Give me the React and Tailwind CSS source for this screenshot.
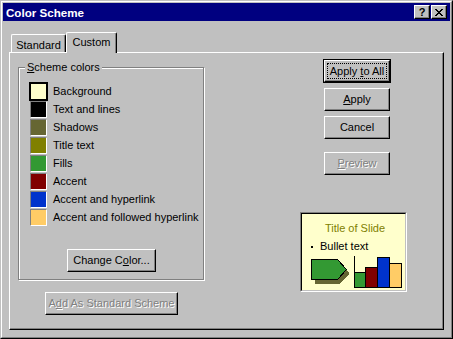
import React from "react";

const FONT = "font-['Liberation_Sans',Arial,sans-serif]";

function Bevel({ w, h, children, disabled, extra = "" }) {
  return (
    <div
      className={`${w} ${h} bg-[#c0c0c0] border border-t-white border-l-white border-r-black border-b-black shadow-[inset_-1px_-1px_0_#808080] flex items-center justify-center text-[11px] leading-[13px] ${
        disabled ? "text-[#808080] [text-shadow:1px_1px_0_#ffffff]" : "text-black"
      } ${extra}`}
    >
      {children}
    </div>
  );
}

function Swatch({ color, selected }) {
  return (
    <div
      className={`w-[17px] h-[17px] shrink-0 border ${
        selected
          ? "border-black shadow-[0_0_0_1px_#000]"
          : "border-t-[#808080] border-l-[#808080] border-r-white border-b-white"
      }`}
      style={{ backgroundColor: color }}
    />
  );
}

const rows = [
  ["Background", "#ffffcc", true],
  ["Text and lines", "#000000"],
  ["Shadows", "#666633"],
  ["Title text", "#808000"],
  ["Fills", "#339933"],
  ["Accent", "#800000"],
  ["Accent and hyperlink", "#0033cc"],
  ["Accent and followed hyperlink", "#ffcc66"],
];

function CloseGlyph() {
  const px = [
    [0, 0], [1, 0], [6, 0], [7, 0],
    [1, 1], [2, 1], [5, 1], [6, 1],
    [2, 2], [3, 2], [4, 2], [5, 2],
    [3, 3], [4, 3],
    [2, 4], [3, 4], [4, 4], [5, 4],
    [1, 5], [2, 5], [5, 5], [6, 5],
    [0, 6], [1, 6], [6, 6], [7, 6],
  ];
  return (
    <svg width="8" height="7" viewBox="0 0 8 7" shapeRendering="crispEdges">
      {px.map(([x, y], i) => (
        <rect key={i} x={x} y={y} width="1" height="1" fill="#000" />
      ))}
    </svg>
  );
}

function PreviewArt() {
  const pent = (dx, dy) =>
    `${9.5 + dx},${7.5 + dy} ${35.5 + dx},${7.5 + dy} ${44.5 + dx},${17.5 + dy} ${35.5 + dx},${27.5 + dy} ${9.5 + dx},${27.5 + dy}`;
  return (
    <svg width="103" height="37" viewBox="0 0 103 37" shapeRendering="crispEdges">
      <polygon points={pent(3, 4)} fill="#666633" stroke="none" />
      <polygon points={pent(0, 0)} fill="#339933" stroke="#000" strokeWidth="1" />
      <rect x="52.5" y="20.5" width="11" height="15" fill="#339933" stroke="#000" />
      <rect x="63.5" y="15.5" width="12" height="20" fill="#800000" stroke="#000" />
      <rect x="75.5" y="5.5" width="12" height="30" fill="#0033cc" stroke="#000" />
      <rect x="87.5" y="11.5" width="12" height="24" fill="#ffcc66" stroke="#000" />
      <line x1="52.5" y1="4" x2="52.5" y2="36" stroke="#000" />
      <line x1="52" y1="35.5" x2="100" y2="35.5" stroke="#000" />
    </svg>
  );
}

export default function App() {
  return (
    <div className={`w-[453px] h-[339px] bg-[#c0c0c0] border border-t-[#c0c0c0] border-l-[#c0c0c0] border-r-black border-b-black ${FONT} text-[11px] leading-[13px] select-none`}>
      <div className="h-full border border-t-white border-l-white border-r-[#808080] border-b-[#808080] p-px flex flex-col">
        {/* Title bar */}
        <div className="h-[18px] shrink-0 bg-[#000080] flex items-center justify-between pl-[3px] pr-[3px]">
          <span className="text-white font-bold text-[11.6px] leading-[13px]">Color Scheme</span>
          <div className="flex">
            <Bevel w="w-[16px]" h="h-[14px]" extra="font-bold text-[11px] leading-[11px]">?</Bevel>
            <Bevel w="w-[16px]" h="h-[14px]" extra="ml-px">
              <CloseGlyph />
            </Bevel>
          </div>
        </div>

        {/* Body */}
        <div className="px-[6px] pt-[11px] flex flex-col">
          {/* Tabs */}
          <div className="h-[20px] flex items-end pl-[2px]">
            <div className="w-[55px] h-[18px] border-t border-l border-t-white border-l-white border-r border-r-black shadow-[inset_-1px_0_0_#808080] rounded-tl-[2px] rounded-tr-[2px] flex items-center justify-center pt-[3px]">
              Standard
            </div>
            <div className="relative z-10 w-[51px] h-[21px] -mb-px bg-[#c0c0c0] border-t border-l border-t-white border-l-white border-r border-r-black shadow-[inset_-1px_0_0_#808080] rounded-tl-[2px] rounded-tr-[2px] flex items-center justify-center pb-[1px]">
              Custom
            </div>
          </div>

          {/* Panel */}
          <div className="h-[278px] border border-t-white border-l-white border-r-black border-b-black shadow-[inset_-1px_-1px_0_#808080] flex">
            {/* Left column */}
            <div className="flex flex-col">
              <div className="relative ml-[8px] mt-[14px] w-[186px] h-[213px] border border-[#808080] shadow-[1px_1px_0_#ffffff,inset_1px_1px_0_#ffffff] flex flex-col pt-[14px] pl-[11px]">
                <span className="absolute left-[6px] -top-[7px] px-[2px] bg-[#c0c0c0]">
                  <u className="underline-offset-[1px]">S</u>cheme colors
                </span>
                {rows.map(([label, color, sel]) => (
                  <div key={label} className="h-[18px] flex items-center gap-[6px]">
                    <Swatch color={color} selected={sel} />
                    <span className="whitespace-nowrap">{label}</span>
                  </div>
                ))}
                <div className="mt-[23px] ml-[37px]">
                  <Bevel w="w-[89px]" h="h-[23px]">
                    Change C<u className="underline-offset-[1px]">o</u>lor...
                  </Bevel>
                </div>
              </div>
              <div className="mt-[12px] ml-[35px]">
                <Bevel w="w-[133px]" h="h-[23px]" disabled>
                  A<u className="underline-offset-[1px]">d</u>d As Standard Scheme
                </Bevel>
              </div>
            </div>

            {/* Right column */}
            <div className="ml-[96px] flex flex-col">
              <div className="ml-[23px] mt-[6px] w-[68px] h-[24px] border border-black">
                <div className="w-full h-full bg-[#c0c0c0] border border-t-white border-l-white border-r-black border-b-black shadow-[inset_-1px_-1px_0_#808080] flex p-[2px]">
                  <div className="flex-1 border border-dotted border-black flex items-center justify-center whitespace-pre">
                    Apply <u className="underline-offset-[1px]">t</u>o All
                  </div>
                </div>
              </div>
              <div className="ml-[24px] mt-[5px]">
                <Bevel w="w-[66px]" h="h-[23px]">
                  <u className="underline-offset-[1px]">A</u>pply
                </Bevel>
              </div>
              <div className="ml-[24px] mt-[5px]">
                <Bevel w="w-[66px]" h="h-[23px]">Cancel</Bevel>
              </div>
              <div className="ml-[24px] mt-[13px]">
                <Bevel w="w-[66px]" h="h-[23px]" disabled>
                  <u className="underline-offset-[1px]">P</u>review
                </Bevel>
              </div>

              {/* Preview box */}
              <div className="mt-[37px] w-[107px] h-[80px] border border-t-[#808080] border-l-[#808080] border-r-white border-b-white">
                <div className="w-full h-full border border-t-black border-l-black border-r-[#c0c0c0] border-b-[#c0c0c0] bg-[#ffffcc] flex flex-col">
                  <div className="mt-[8px] text-center pl-[3px] text-[#808000]">Title of Slide</div>
                  <div className="mt-[5px] flex items-center pl-[9px]">
                    <span className="w-[2px] h-[2px] bg-black" />
                    <span className="ml-[7px] text-black">Bullet text</span>
                  </div>
                  <div className="-mt-[1px]">
                    <PreviewArt />
                  </div>
                </div>
              </div>
            </div>
          </div>
        </div>
      </div>
    </div>
  );
}
